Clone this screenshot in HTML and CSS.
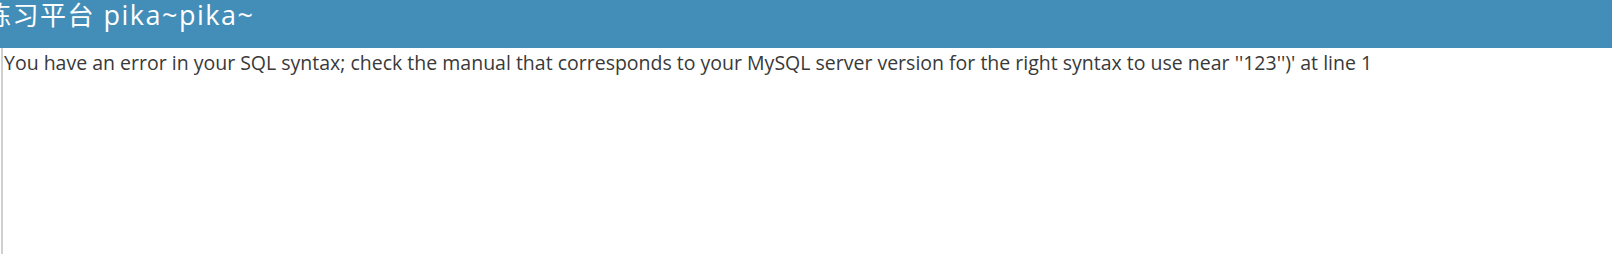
FILE: index.html
```html
<!DOCTYPE html>
<html>
<head>
<meta charset="utf-8">
<link rel="stylesheet" href="styles.css">
</head>
<body>
<div class="navbar"><span class="brand"><span class="brand-cn">练习平台</span> pika~pika~</span></div>
<div class="main">
  <div class="content">You have an error in your SQL syntax; check the manual that corresponds to your MySQL server version for the right syntax to use near ''123'')' at line 1</div>
</div>
</body>
</html>
```
FILE: styles.css
```css
html, body {
  margin: 0;
  padding: 0;
  height: 100%;
  overflow: hidden;
  background: #fff;
}
body {
  font-family: "Open Sans", "Noto Sans CJK SC", sans-serif;
  color: #393939;
}
.navbar {
  height: 48px;
  background: #438eb9;
  overflow: hidden;
  white-space: nowrap;
}
.brand {
  display: inline-block;
  margin-left: -15px;
  color: #fff;
  font-size: 27px;
  line-height: 27px;
  letter-spacing: 1.5px;
}
.brand-cn {
  font-family: "Noto Sans CJK SC", sans-serif;
  font-size: 26px;
}
.main {
  height: calc(100% - 48px);
  margin-left: 1px;
  border-left: 2px solid #d0d0d0;
}
.content {
  font-size: 19.5px;
  line-height: 29px;
  padding-left: 1px;
  white-space: nowrap;
}
```
